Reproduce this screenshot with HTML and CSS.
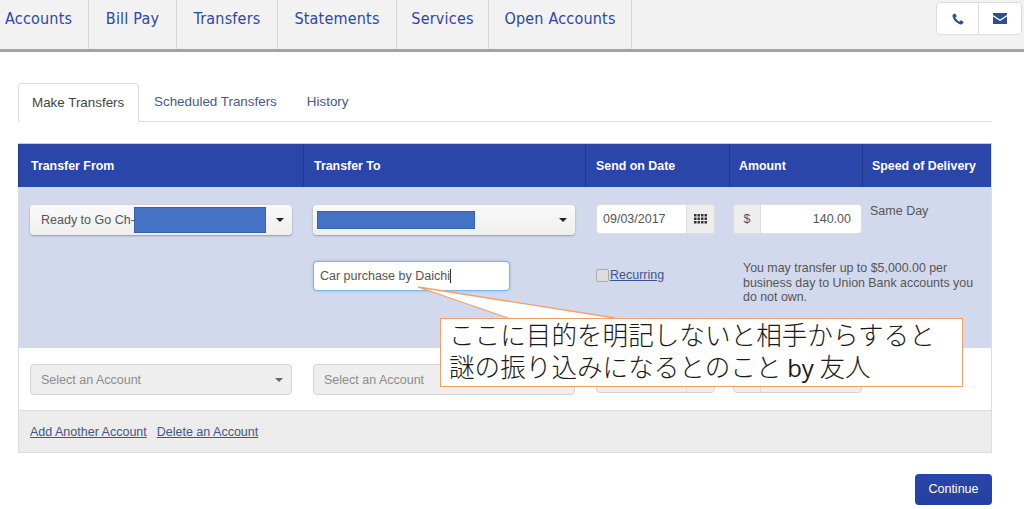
FILE: index.html
```html
<!DOCTYPE html>
<html lang="en">
<head>
	<meta charset="UTF-8">
	<title>Make Transfers</title>
	<link rel="stylesheet" href="styles.css">
</head>
<body>
<div class="topnav">
	<a class="nav-item">Accounts</a>
	<a class="nav-item">Bill Pay</a>
	<a class="nav-item">Transfers</a>
	<a class="nav-item">Statements</a>
	<a class="nav-item">Services</a>
	<a class="nav-item">Open Accounts</a>
	<div class="contact">
		<span class="contact-btn">
			<svg width="12" height="12" viewBox="0 0 12 12"><path fill="#2f4f8f" d="M2.600.600 1 1.600C.5 2 .4 3 .8 4.300 1.600 7 5 10.400 7.700 11.200c1.300.4 2.300.3 2.700-.2l1-1.600c.1-.2.100-.5-.1-.6L9.100 7.300c-.2-.1-.5-.1-.6.100l-.8 1c-.2.200-.4.200-.6.100C6.300 8 4 5.700 3.500 4.900c-.1-.2-.1-.4.100-.6l1-.8c.2-.1.200-.4.100-.6L3.200.8C3.100.500 2.800.500 2.600.600Z"/></svg>
		</span>
		<span class="contact-btn">
			<svg width="14" height="11" viewBox="0 0 14 11"><path fill="#2f4f8f" d="M0 0h14v2L7 6.500 0 2ZM0 3.500 7 8l7-4.500V11H0Z"/></svg>
		</span>
	</div>
</div>

<div class="page">
	<div class="tabs">
		<a class="tab on">Make Transfers</a>
		<a class="tab">Scheduled Transfers</a>
		<a class="tab">History</a>
	</div>

	<div class="panel">
		<div class="row head">
			<div class="th th-from">Transfer From</div>
			<div class="th">Transfer To</div>
			<div class="th">Send on Date</div>
			<div class="th th-tight">Amount</div>
			<div class="th th-tight">Speed of Delivery</div>
		</div>

		<div class="active">
			<div class="row row-one">
				<div class="cell cell-from">
					<div class="select">
						<span class="select-text">Ready to Go Ch-<span class="mask mask-from"></span></span>
						<i class="caret"></i>
					</div>
				</div>
				<div class="cell cell-to">
					<div class="select select-to">
						<span class="mask mask-to"></span>
						<i class="caret"></i>
					</div>
				</div>
				<div class="cell cell-date">
					<div class="group">
						<span class="group-input">09/03/2017</span>
						<span class="group-addon addon-cal">
							<svg width="13" height="10" viewBox="0 0 13 10"><path fill="#333" d="M0 0h2.500v2.500H0ZM3.500 0H6v2.500H3.500ZM7 0h2.500v2.500H7ZM10.500 0H13v2.500h-2.500ZM0 3.500h2.500V6H0ZM3.500 3.500H6V6H3.500ZM7 3.500h2.500V6H7ZM10.500 3.500H13V6h-2.500ZM0 7h2.500v2.500H0ZM3.500 7H6v2.500H3.500ZM7 7h2.500v2.500H7ZM10.500 7H13v2.500h-2.500Z"/></svg>
						</span>
					</div>
				</div>
				<div class="cell cell-amount">
					<div class="group">
						<span class="group-addon addon-dollar">$</span>
						<span class="group-input input-right">140.00</span>
					</div>
				</div>
				<div class="cell cell-speed">Same Day</div>
			</div>
			<div class="row row-two">
				<div class="cell cell-from"></div>
				<div class="cell cell-to">
					<div class="memo">Car purchase by Daichi<i class="cursor"></i></div>
				</div>
				<div class="cell cell-date">
					<label class="recurring"><i class="check"></i><a class="link">Recurring</a></label>
				</div>
				<div class="note">You may transfer up to $5,000.00 per business day to Union Bank accounts you do not own.</div>
			</div>
		</div>

		<div class="row row-next">
			<div class="cell cell-from">
				<div class="select off"><span class="select-text">Select an Account</span><i class="caret"></i></div>
			</div>
			<div class="cell cell-to">
				<div class="select off"><span class="select-text">Select an Account</span><i class="caret"></i></div>
			</div>
			<div class="cell cell-date">
				<div class="group off">
					<span class="group-input"></span>
					<span class="group-addon addon-cal"></span>
				</div>
			</div>
			<div class="cell cell-amount">
				<div class="group off">
					<span class="group-addon addon-dollar"></span>
					<span class="group-input"></span>
				</div>
			</div>
		</div>

		<div class="foot">
			<a class="link">Add Another Account</a>
			<a class="link">Delete an Account</a>
		</div>
	</div>

	<div class="actions">
		<a class="btn-continue">Continue</a>
	</div>
</div>

<!-- annotation pasted over the screenshot -->
<svg class="callout-tail" width="200" height="33" viewBox="0 0 200 33">
	<path fill="#fff" stroke="#f2a069" stroke-width="1.300" d="M91 32 1 1 198 32"/>
</svg>
<div class="callout">
	<div class="callout-text">
		<div>ここに目的を明記しないと相手からすると</div>
		<div>謎の振り込みになるとのこと <span class="latin">by</span> 友人</div>
	</div>
</div>
</body>
</html>
```

FILE: styles.css
```css
* {
	box-sizing: border-box;
}

html, body {
	margin: 0;
	height: 509px;
	overflow: hidden;
}

body {
	background: #fff;
	color: #555;
	font-family: "Liberation Sans", Arial, sans-serif;
	font-size: 12.5px;
	position: relative;
}

/* top nav */
.topnav {
	display: grid;
	grid-template-columns: 89px 88px 101px 119px 92px 143px 1fr;
	height: 52px;
	background: #f2f2f2;
	border-bottom: 3px solid #a3a3a3;
}

.nav-item {
	border-right: 1px solid #d6d6d6;
	color: #2e46a8;
	font-family: "DejaVu Sans Condensed", "DejaVu Sans", sans-serif;
	font-size: 16px;
	letter-spacing: .2px;
	line-height: 37px;
	text-align: center;
	white-space: nowrap;
}

.nav-item:first-child {
	padding-left: 5px;
	text-align: left;
}

.contact {
	display: flex;
	justify-self: end;
	height: 33px;
	margin: 2px 2px 0 0;
	background: #fff;
	border: 1px solid #ddd;
	border-radius: 4px;
}

.contact-btn {
	display: flex;
	align-items: center;
	justify-content: center;
	width: 41px;
}

.contact-btn + .contact-btn {
	width: 43px;
	border-left: 1px solid #ddd;
}

/* tabs */
.page {
	padding: 31px 32px 0 18px;
}

.tabs {
	display: flex;
	height: 39px;
	border-bottom: 1px solid #ddd;
}

.tab {
	height: 39px;
	padding: 0 15px;
	color: #46598a;
	font-size: 13.4px;
	line-height: 38px;
	white-space: nowrap;
}

.tab.on {
	width: 121px;
	padding: 0 0 0 13px;
	background: #fff;
	color: #444;
	border: 1px solid #ddd;
	border-bottom: 0;
	border-radius: 4px 4px 0 0;
}

/* transfer table */
.panel {
	margin-top: 21px;
	border: 1px solid #ddd;
	border-top: 1px solid #ccc;
}

.row {
	display: grid;
	grid-template-columns: 284px 282px 144px 133px 1fr;
}

.head {
	height: 43px;
	background: #2946a8;
	border-left: 1px solid #1f3a8f;
	margin-left: -1px;
}

.th {
	padding-left: 10px;
	padding-top: 1px;
	border-left: 1px solid #1f3a8f;
	color: #fff;
	font-size: 12.4px;
	font-weight: bold;
	line-height: 42px;
}

.th-from {
	padding-left: 12px;
	border-left: 0;
}

.th-tight {
	padding-left: 9px;
}

.active {
	background: #d3d9ed;
	height: 161px;
}

.row-one {
	height: 74px;
	padding-top: 18px;
}

.row-two {
	height: 87px;
}

.cell-from {
	padding-left: 11px;
}

.cell-to {
	padding-left: 10px;
}

.cell-date {
	padding-left: 11px;
}

.cell-amount {
	padding-left: 4px;
}

.cell-speed {
	margin-top: -1px;
	padding-left: 8px;
}

/* dropdowns */
.select {
	display: flex;
	align-items: center;
	justify-content: space-between;
	width: 262px;
	height: 30px;
	padding: 0 8px 0 11px;
	background: linear-gradient(#fafafa, #eee);
	border-radius: 4px;
	box-shadow: 0 1px 2px rgba(0, 0, 0, .3);
	color: #555;
}

.select.off {
	height: 31px;
	padding-left: 10px;
	background: #eee;
	border: 1px solid #d4d4d4;
	box-shadow: none;
	color: #8c8c8c;
}

.select-to {
	padding-left: 4px;
}

.select-text {
	display: flex;
	align-items: center;
}

.caret {
	width: 0;
	height: 0;
	border: 4px solid transparent;
	border-top: 4px solid #222;
	border-bottom: 0;
}

.off .caret {
	border-top-color: #666;
}

.mask {
	display: block;
	background: #4472c4;
	border: 1px solid #3a62ab;
}

.mask-from {
	width: 132px;
	height: 26px;
	margin-left: -1px;
}

.mask-to {
	width: 158px;
	height: 18px;
}

/* date and amount */
.group {
	display: flex;
	height: 30px;
	width: 119px;
	margin-top: -1px;
	border: 1px solid #ddd;
	border-radius: 4px;
	overflow: hidden;
	background: #fff;
}

.cell-amount .group {
	width: 129px;
}

.group-input {
	flex: 1;
	padding: 0 6px;
	color: #555;
	line-height: 29px;
}

.input-right {
	padding-right: 10px;
	text-align: right;
}

.group-addon {
	display: flex;
	align-items: center;
	justify-content: center;
	background: #eee;
	color: #555;
}

.addon-cal {
	width: 28px;
	border-left: 1px solid #ddd;
}

.addon-dollar {
	width: 27px;
	border-right: 1px solid #ddd;
}

.group.off {
	background: #eee;
	border-color: #d4d4d4;
}

/* memo row */
.memo {
	display: flex;
	align-items: center;
	width: 197px;
	height: 30px;
	padding-left: 6px;
	background: #fff;
	border: 1px solid #7db5ea;
	border-radius: 4px;
	box-shadow: 0 0 3px rgba(102, 175, 233, .7);
	color: #555;
}

.cursor {
	width: 1px;
	height: 14px;
	background: #333;
}

.recurring {
	display: flex;
	align-items: center;
	gap: 1px;
	padding-top: 7px;
}

.check {
	width: 13px;
	height: 13px;
	background: #ddd;
	border: 1px solid #aaa;
	border-radius: 2px;
}

.link {
	color: #3f5590;
	text-decoration: underline;
}

.note {
	grid-column: 4 / 6;
	padding: 0 12px 0 14px;
	font-size: 12.4px;
	line-height: 14.500px;
}

/* next empty account */
.row-next {
	height: 62px;
	padding-top: 16px;
	background: #fff;
}

.foot {
	display: flex;
	gap: 10px;
	height: 42px;
	padding-left: 11px;
	align-items: center;
	background: #ececec;
	border-top: 1px solid #ddd;
}

.actions {
	display: flex;
	justify-content: flex-end;
	margin-top: 21px;
}

.btn-continue {
	width: 77px;
	height: 31px;
	background: linear-gradient(#2946a8, #2440a0);
	border-radius: 4px;
	color: #fff;
	font-size: 12.500px;
	line-height: 31px;
	text-align: center;
}

/* annotation */
.callout {
	position: absolute;
	left: 440px;
	top: 318px;
	width: 523px;
	height: 69px;
	padding-left: 8px;
	background: #fff;
	border: 1px solid #f2a069;
	color: #1a1a1a;
	font-family: "Noto Sans CJK JP", sans-serif;
	font-size: 25.6px;
	font-weight: 300;
	line-height: 32px;
}

.callout-text {
	margin-top: -1px;
}

.callout .latin {
	font-family: "Open Sans", sans-serif;
	font-weight: 400;
	font-size: 24px;
	line-height: 1;
}

.callout-tail {
	position: absolute;
	left: 417px;
	top: 286px;
}
```
